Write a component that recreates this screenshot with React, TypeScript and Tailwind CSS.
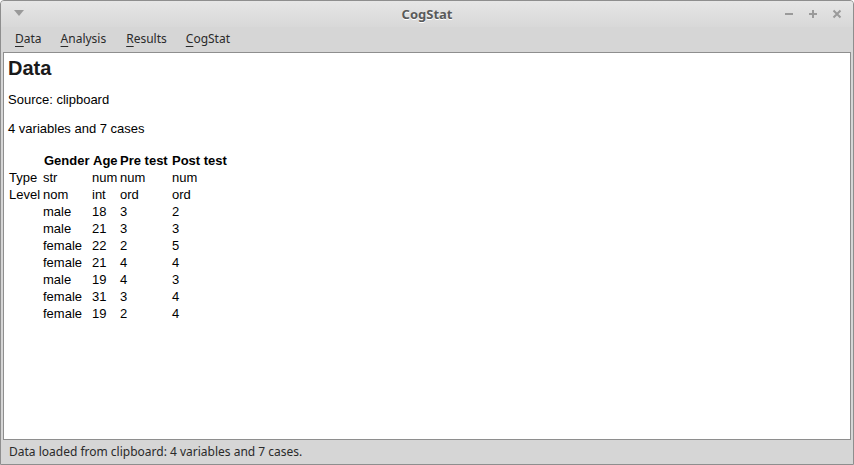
import React from "react";

const rows = [
  ["male", "18", "3", "2"],
  ["male", "21", "3", "3"],
  ["female", "22", "2", "5"],
  ["female", "21", "4", "4"],
  ["male", "19", "4", "3"],
  ["female", "31", "3", "4"],
  ["female", "19", "2", "4"],
];

function Menu({ first, rest }: { first: string; rest: string }) {
  return (
    <span>
      <span className="underline underline-offset-[3px]">{first}</span>
      {rest}
    </span>
  );
}

export default function App() {
  const cell = "p-0 h-[17px] leading-[17px] align-middle";
  return (
    <div className="w-[854px] h-[465px] bg-[#d6d6d6] border border-[#8e8e8e] rounded-t-[4px] flex flex-col overflow-hidden" style={{ fontFamily: "'Noto Sans', 'Open Sans', sans-serif" }}>
      <div className="h-[26px] flex items-center relative bg-gradient-to-b from-[#e6e6e6] to-[#d8d8d8]">
        <svg className="absolute left-[13px] top-[9px]" width="10" height="6" viewBox="0 0 10 6">
          <path d="M0 0 L10 0 L5 6 Z" fill="#9a9a9a" />
        </svg>
        <div className="w-full text-center text-[13px] font-bold text-[#5a5a5a] [text-shadow:0_1px_0_#ffffff] leading-none">CogStat</div>
        <svg className="absolute left-[783px] top-[8px]" width="10" height="10" viewBox="0 0 10 10">
          <rect x="1" y="4" width="8" height="2" fill="#9a9a9a" />
        </svg>
        <svg className="absolute left-[807px] top-[8px]" width="10" height="10" viewBox="0 0 10 10">
          <rect x="1" y="4" width="8" height="2" fill="#9a9a9a" />
          <rect x="4" y="1" width="2" height="8" fill="#9a9a9a" />
        </svg>
        <svg className="absolute left-[831px] top-[8px]" width="10" height="10" viewBox="0 0 10 10">
          <path d="M1.5 1.5 L8.5 8.5 M8.5 1.5 L1.5 8.5" stroke="#9a9a9a" strokeWidth="2" />
        </svg>
      </div>
      <div className="h-[25px] flex items-center pb-[1px] pl-[14px] text-[12px] text-[#2a2a2a] gap-[19px]">
        <Menu first="D" rest="ata" />
        <Menu first="A" rest="nalysis" />
        <span className="ml-[1px]"><Menu first="R" rest="esults" /></span>
        <Menu first="C" rest="ogStat" />
      </div>
      <div className="mx-[2px] h-[388px] bg-white border border-[#8e8e8e] text-black" style={{ fontFamily: "'Liberation Sans', Arial, sans-serif" }}>
        <div className="pl-[4px] pt-[3px]">
          <div className="text-[20px] font-bold leading-[24px] text-[#1a1a1a]">Data</div>
          <div className="text-[13px] mt-[12px] leading-[16px]">Source: clipboard</div>
          <div className="text-[13px] mt-[13px] leading-[16px]">4 variables and 7 cases</div>
          <table className="mt-[15px] text-[13px] border-separate border-spacing-0 ml-[1px]">
            <tbody>
              <tr className="font-bold">
                <td className={`${cell} w-[34px]`}></td>
                <td className={`${cell} w-[49px] pl-[1px]`}>Gender</td>
                <td className={`${cell} w-[28px] pl-[1px]`}>Age</td>
                <td className={`${cell} w-[52px]`}>Pre test</td>
                <td className={`${cell}`}>Post test</td>
              </tr>
              <tr>
                <td className={cell}>Type</td>
                <td className={cell}>str</td>
                <td className={cell}>num</td>
                <td className={cell}>num</td>
                <td className={cell}>num</td>
              </tr>
              <tr>
                <td className={cell}>Level</td>
                <td className={cell}>nom</td>
                <td className={cell}>int</td>
                <td className={cell}>ord</td>
                <td className={cell}>ord</td>
              </tr>
              {rows.map((r, i) => (
                <tr key={i}>
                  <td className={cell}></td>
                  {r.map((c, j) => (
                    <td key={j} className={cell}>{c}</td>
                  ))}
                </tr>
              ))}
            </tbody>
          </table>
        </div>
      </div>
      <div className="flex-1 flex items-center pl-[8px] text-[12px] text-[#2a2a2a]">
        Data loaded from clipboard: 4 variables and 7 cases.
      </div>
    </div>
  );
}
